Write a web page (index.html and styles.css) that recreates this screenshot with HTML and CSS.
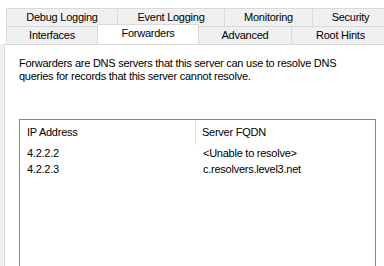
FILE: index.html
```html
<!DOCTYPE html>
<html lang="en">
<head>
    <meta charset="UTF-8">
    <title>DNS Server Properties</title>
    <link rel="stylesheet" href="styles.css">
</head>
<body>
    <div class="tabs">
        <div class="tab-row">
            <div class="tab first w-debug">Debug Logging</div>
            <div class="tab w-event">Event Logging</div>
            <div class="tab w-monitor">Monitoring</div>
            <div class="tab w-security">Security</div>
        </div>
        <div class="tab-row">
            <div class="tab first w-interfaces">Interfaces</div>
            <div class="tab selected w-forwarders">Forwarders</div>
            <div class="tab w-advanced">Advanced</div>
            <div class="tab w-roothints">Root Hints</div>
        </div>
    </div>

    <div class="panel-wrap">
        <div class="panel">
            <p class="intro">Forwarders are DNS servers that this server can use to resolve DNS queries for records that this server cannot resolve.</p>

            <div class="list">
                <div class="list-row list-head">
                    <div class="col col-ip">IP Address</div>
                    <div class="col col-fqdn">Server FQDN</div>
                </div>
                <div class="list-row">
                    <div class="col col-ip">4.2.2.2</div>
                    <div class="col col-fqdn">&lt;Unable to resolve&gt;</div>
                </div>
                <div class="list-row">
                    <div class="col col-ip">4.2.2.3</div>
                    <div class="col col-fqdn">c.resolvers.level3.net</div>
                </div>
            </div>
        </div>
    </div>
</body>
</html>
```

FILE: styles.css
```css
body {
    margin: 0;
    padding: 0;
    background-color: #ffffff;
    font-family: "Liberation Sans", Arial, sans-serif;
    font-size: 11px;
    letter-spacing: -0.25px;
    color: #000000;
    overflow: hidden;
}

/* tab strip */
.tabs {
    padding-top: 8px;
    padding-left: 6px;
    white-space: nowrap;
    overflow: hidden;
}

.tab-row {
    display: flex;
    height: 18px;
}

.tab {
    flex: none;
    box-sizing: border-box;
    height: 18px;
    line-height: 17px;
    text-align: center;
    background-color: #f0f0f0;
    border-top: 1px solid #d9d9d9;
    border-right: 1px solid #d9d9d9;
}

.tab.first {
    border-left: 1px solid #d9d9d9;
}

.tab.selected {
    position: relative;
    z-index: 1;
    height: 21px;
    margin-top: -2px;
    margin-bottom: -1px;
    margin-left: -1px;
    line-height: 17px;
    background-color: #ffffff;
    border-left: 1px solid #d9d9d9;
}

.w-debug { width: 112px; }
.w-event { width: 107px; }
.w-monitor { width: 88px; }
.w-security { width: 76px; }
.w-interfaces { width: 92px; }
.w-forwarders { width: 102px; }
.w-advanced { width: 93px; }
.w-roothints { width: 98px; }

/* page body */
.panel-wrap {
    background-color: #f0f0f0;
    padding-left: 4px;
    height: 222px;
    overflow: hidden;
}

.panel {
    box-sizing: border-box;
    height: 100%;
    background-color: #ffffff;
    border-top: 1px solid #d9d9d9;
    border-left: 1px solid #d9d9d9;
    padding: 12px 8px 0 14px;
}

.intro {
    margin: 0;
    width: 345px;
    line-height: 13px;
}

.list {
    margin-top: 36px;
    height: 200px;
    border: 1px solid #828790;
    background-color: #ffffff;
}

.list-row {
    display: flex;
    height: 16px;
    line-height: 16px;
}

.list-head {
    height: 25px;
    line-height: 25px;
}

.col {
    box-sizing: border-box;
}

.col-ip {
    width: 176px;
    padding-left: 7px;
}

.col-fqdn {
    padding-left: 7px;
}

.list-head .col-ip {
    border-right: 1px solid #e5e5e5;
}

.list-head .col-fqdn {
    padding-left: 6px;
}
```
